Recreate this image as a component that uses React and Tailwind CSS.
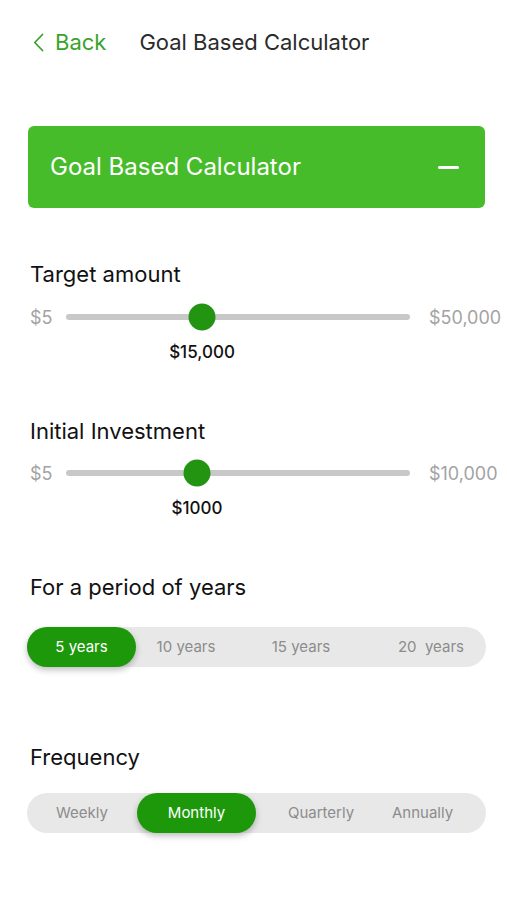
const periods = [
  { label: "5 years", active: true, cls: "w-[109px] justify-center" },
  { label: "10 years", cls: "w-[100px] justify-center" },
  { label: "15 years", cls: "w-[130px] justify-center" },
  { label: "20  years", cls: "flex-1 justify-end pr-[22px]" },
];

const frequencies = [
  { label: "Weekly", cls: "w-[110px] justify-center" },
  { label: "Monthly", active: true, cls: "w-[119px] justify-center" },
  { label: "Quarterly", cls: "w-[130px] justify-center" },
  { label: "Annually", cls: "flex-1 justify-start pl-[6px]" },
];

const AmountSlider = ({ min, max, value, knob }) => (
  <>
    <div className="flex items-center h-[28px] pl-[2px] w-[480px]">
      <span className="w-[36px] shrink-0 text-[18px] text-[#a3a3a3]">{min}</span>
      <div className="relative shrink-0 w-[344px] h-[6px] rounded-full bg-[#c8c8c8]">
        <div
          className="absolute top-1/2 w-[27px] h-[27px] -translate-x-1/2 -translate-y-1/2 rounded-full bg-[#229412]"
          style={{ left: knob }}
        />
      </div>
      <span className="ml-[19px] whitespace-nowrap text-[18px] text-[#a3a3a3]">{max}</span>
    </div>
    <div className="mt-[9px] h-[24px] relative">
      <span
        className="absolute -translate-x-1/2 text-[17px] leading-[24px] font-medium text-[#111]"
        style={{ left: knob + 38 }}
      >
        {value}
      </span>
    </div>
  </>
);

const Segmented = ({ items }) => (
  <div className="flex h-[40px] w-[459px] ml-[-1px] rounded-full bg-[#e8e8e8]">
    {items.map((it) => (
      <div
        key={it.label}
        className={`flex items-center whitespace-pre text-[15px] ${it.cls} ${
          it.active
            ? "rounded-full bg-[#1e980b] text-white shadow-[0_3px_6px_rgba(0,0,0,0.25)]"
            : "text-[#8c8c8c]"
        }`}
      >
        {it.label}
      </div>
    ))}
  </div>
);

export default function App() {
  return (
    <div className="w-[507px] min-h-[900px] bg-white font-['Inter',sans-serif] overflow-hidden">
      {/* Header */}
      <div className="flex items-center h-[28px] mt-[28px] pl-[33px]">
        <svg width="11" height="19" viewBox="0 0 11 19" fill="none">
          <path d="M9.5 1.5 1.8 9.5l7.7 8" stroke="#3aa32a" strokeWidth="1.8" strokeLinecap="round" strokeLinejoin="round" />
        </svg>
        <span className="ml-[11px] text-[22px] leading-[28px] text-[#3aa32a]">Back</span>
        <span className="ml-[33px] text-[22px] leading-[28px] text-[#2b2b2b]">Goal Based Calculator</span>
      </div>

      <div className="pl-[28px] pr-[22px]">
        {/* Card */}
        <div className="mt-[70px] flex items-center justify-between h-[82px] rounded-[6px] bg-[#47bc2b] pl-[22px] pr-[26px]">
          <span className="text-[24px] text-white">Goal Based Calculator</span>
          <span className="block w-[21px] h-[3px] rounded-full bg-white" />
        </div>

        <div className="pl-[2px]">
          <div className="mt-[52px] text-[22px] leading-[28px] text-[#111]">Target amount</div>
        </div>
        <div className="mt-[15px]">
          <AmountSlider min="$5" max="$50,000" value="$15,000" knob={136} />
        </div>

        <div className="pl-[2px]">
          <div className="mt-[53px] text-[22px] leading-[28px] text-[#111]">Initial Investment</div>
        </div>
        <div className="mt-[14px]">
          <AmountSlider min="$5" max="$10,000" value="$1000" knob={131} />
        </div>

        <div className="pl-[2px]">
          <div className="mt-[53px] text-[22px] leading-[28px] text-[#111]">For a period of years</div>
        </div>
        <div className="mt-[26px]">
          <Segmented items={periods} />
        </div>

        <div className="pl-[2px]">
          <div className="mt-[76px] text-[22px] leading-[28px] text-[#111]">Frequency</div>
        </div>
        <div className="mt-[22px]">
          <Segmented items={frequencies} />
        </div>
      </div>
    </div>
  );
}
